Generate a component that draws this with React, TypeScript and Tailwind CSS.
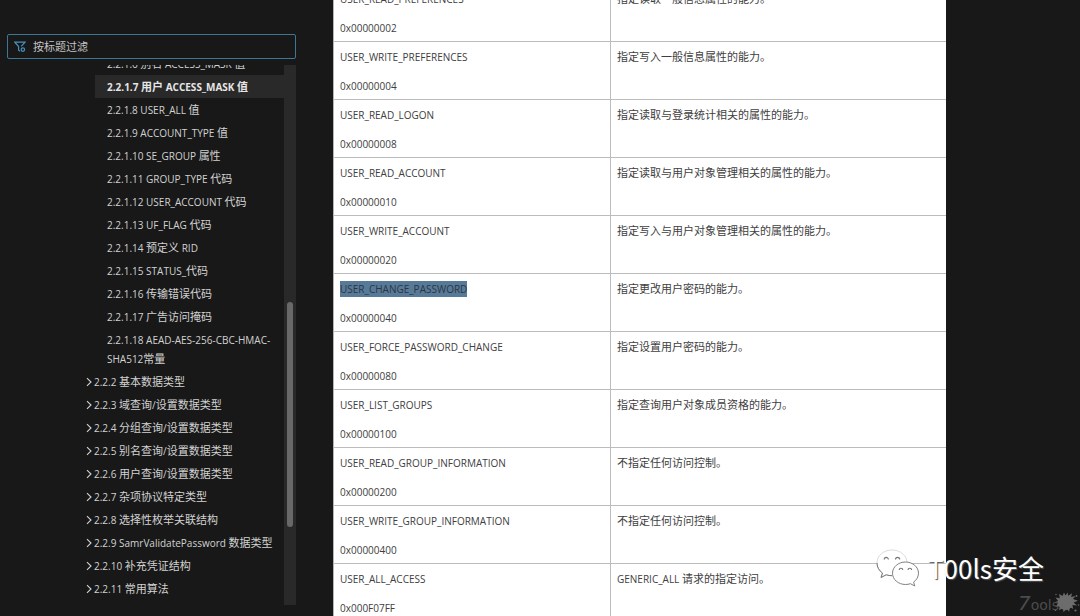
const leafItems = [
  "2.2.1.6 别名 ACCESS_MASK 值",
  "2.2.1.7 用户 ACCESS_MASK 值",
  "2.2.1.8 USER_ALL 值",
  "2.2.1.9 ACCOUNT_TYPE 值",
  "2.2.1.10 SE_GROUP 属性",
  "2.2.1.11 GROUP_TYPE 代码",
  "2.2.1.12 USER_ACCOUNT 代码",
  "2.2.1.13 UF_FLAG 代码",
  "2.2.1.14 预定义 RID",
  "2.2.1.15 STATUS_代码",
  "2.2.1.16 传输错误代码",
  "2.2.1.17 广告访问掩码",
  "2.2.1.18 AEAD-AES-256-CBC-HMAC-SHA512常量",
];

const groupItems = [
  "2.2.2 基本数据类型",
  "2.2.3 域查询/设置数据类型",
  "2.2.4 分组查询/设置数据类型",
  "2.2.5 别名查询/设置数据类型",
  "2.2.6 用户查询/设置数据类型",
  "2.2.7 杂项协议特定类型",
  "2.2.8 选择性枚举关联结构",
  "2.2.9 SamrValidatePassword 数据类型",
  "2.2.10 补充凭证结构",
  "2.2.11 常用算法",
];

const rows = [
  { name: "USER_READ_PREFERENCES", value: "0x00000002", text: "指定读取一般信息属性的能力。" },
  { name: "USER_WRITE_PREFERENCES", value: "0x00000004", text: "指定写入一般信息属性的能力。" },
  { name: "USER_READ_LOGON", value: "0x00000008", text: "指定读取与登录统计相关的属性的能力。" },
  { name: "USER_READ_ACCOUNT", value: "0x00000010", text: "指定读取与用户对象管理相关的属性的能力。" },
  { name: "USER_WRITE_ACCOUNT", value: "0x00000020", text: "指定写入与用户对象管理相关的属性的能力。" },
  { name: "USER_CHANGE_PASSWORD", value: "0x00000040", text: "指定更改用户密码的能力。", marked: true },
  { name: "USER_FORCE_PASSWORD_CHANGE", value: "0x00000080", text: "指定设置用户密码的能力。" },
  { name: "USER_LIST_GROUPS", value: "0x00000100", text: "指定查询用户对象成员资格的能力。" },
  { name: "USER_READ_GROUP_INFORMATION", value: "0x00000200", text: "不指定任何访问控制。" },
  { name: "USER_WRITE_GROUP_INFORMATION", value: "0x00000400", text: "不指定任何访问控制。" },
  { name: "USER_ALL_ACCESS", value: "0x000F07FF", text: "GENERIC_ALL 请求的指定访问。" },
];

// Latin runs are set one size below the Chinese text so both look equally tall.
function Mixed({ text }: { text: string }) {
  const parts = text.split(/([\x20-\x7e]+)/).filter(Boolean);
  return (
    <span>
      {parts.map((part, i) =>
        /^[\x20-\x7e]/.test(part) ? (
          <span key={i} className="text-[10px] leading-none">
            {part}
          </span>
        ) : (
          part
        )
      )}
    </span>
  );
}

function FilterIcon() {
  return (
    <svg viewBox="0 0 12 12" className="h-3 w-3 shrink-0" fill="none" stroke="#4590bd" strokeWidth="1.2" aria-hidden="true">
      <path d="M7.200 5.400 11 1.200H.8l3.800 4.300v3.700l1.600 1" />
      <circle cx="8.900" cy="8.600" r="1.700" />
    </svg>
  );
}

function ChatIcon() {
  return (
    <svg viewBox="0 0 44 38" className="h-[38px] w-11 shrink-0" aria-hidden="true">
      <g fill="#fff">
        <path d="M16 1C7.500 1 1 6.700 1 14c0 4.200 2.100 7.700 5.500 10L5 28.500l5.200-2.700c1.900.6 3.800.9 5.800.9 8.300 0 15-5.700 15-12.900S24.300 1 16 1z" stroke="#ccc" strokeWidth=".7" />
        <path d="M1 14c0 4.200 2.100 7.700 5.500 10L5 28.500l5.200-2.700c1.900.6 3.800.9 5.800.9" fill="none" stroke="#777" strokeWidth="1" />
        <path d="M29.500 13C22.300 13 16.500 18 16.500 24.200s5.800 11.300 13 11.300c1.700 0 3.400-.3 4.900-.8l4.400 2.300-1.200-3.900c3-2.100 4.900-5.300 4.900-8.900C42.500 18 36.700 13 29.500 13z" stroke="#808080" strokeWidth="1" />
      </g>
      <path
        d="M8.200 10.500a2.100 2.100 0 0 1 4.200 0M19.500 10.500a2.100 2.100 0 0 1 4.200 0M23.200 21a1.800 1.800 0 0 1 3.600 0M32 21a1.800 1.800 0 0 1 3.600 0"
        fill="none"
        stroke="#777"
        strokeWidth="1.1"
      />
    </svg>
  );
}

function Splatter() {
  return (
    <svg viewBox="0 0 28 22" className="h-[22px] w-7" fill="#6c6c6c" aria-hidden="true">
      <circle cx="13.500" cy="11" r="7.200" />
      <path d="M12 .5l1.500 3 2.300-3 .3 3.300 4-2.600-1 3.700 4.500-.9-2.600 3 5 1.700-4.400 1.700 3.400 3.200-4.700-.7 1 4.200-3.500-2-.6 4.700-2.700-3.400-3 3.900-.5-4.300-4.200 2.300 1.200-4-4.700.6 2.800-3.400L2 10.500l4.100-1.600L3.500 5.500l4.300.8L7.100 2l3.500 2.100z" />
      <circle cx="24.500" cy="4" r=".9" />
      <circle cx="26.500" cy="13" r=".8" />
      <circle cx="23.500" cy="18.500" r="1.100" />
      <circle cx="3.500" cy="18" r=".9" />
      <circle cx="4" cy="2.500" r=".7" />
    </svg>
  );
}

export default function App() {
  return (
    <div className="relative flex h-screen overflow-hidden bg-[#181818] font-['Open_Sans','Noto_Sans_CJK_SC',sans-serif] text-[11px]">
      <nav className="flex w-[333px] shrink-0 flex-col pt-[34px] pr-[37px] pb-[11px] pl-[7px] text-[#d2d2d2]">
        <label className="flex h-[25px] shrink-0 items-center gap-[7px] rounded-[2px] border border-[#3d7796] px-1.5">
          <FilterIcon />
          <input
            type="text"
            aria-label="按标题过滤"
            placeholder="按标题过滤"
            className="min-w-0 flex-1 bg-transparent pt-0.5 outline-none placeholder:text-[#c4c4c4]"
          />
        </label>
        <div className="mt-1.5 flex min-h-0 flex-1">
          <div className="min-w-0 flex-1 overflow-hidden">
            <ul className="-mt-[13px] ml-[88px] leading-[19px]">
              {leafItems.map((item, i) => (
                <li key={item}>
                  <a
                    href="#"
                    className={i === 1 ? "block bg-[#292929] py-0.5 pl-3 font-bold text-[#e6e6e6]" : "block py-0.5 pl-3"}
                  >
                    <Mixed text={item} />
                  </a>
                </li>
              ))}
            </ul>
            <ul className="ml-[79px] leading-[19px]">
              {groupItems.map((item) => (
                <li key={item}>
                  <a href="#" className="flex items-center gap-0.5 py-0.5 whitespace-nowrap">
                    <svg viewBox="0 0 6 10" className="h-2.5 w-1.5 shrink-0" fill="none" stroke="#d2d2d2" strokeWidth="1.1" aria-hidden="true">
                      <path d="M1 1.200 5 5 1 8.800" />
                    </svg>
                    <Mixed text={item} />
                  </a>
                </li>
              ))}
            </ul>
          </div>
          <div className="flex w-3 shrink-0 flex-col items-center bg-[#292929]">
            <div className="mt-[237px] h-[225px] w-1.5 rounded-full bg-[#686868]" />
          </div>
        </div>
      </nav>
      <main className="min-w-0 flex-1">
        <table className="-mt-[17px] w-full table-fixed border-separate border-spacing-0 border-l border-[#b5b5b5] bg-white text-[#404040]">
          <colgroup>
            <col className="w-[277px]" />
            <col />
          </colgroup>
          <tbody>
            {rows.map((row) => (
              <tr key={row.name} className="align-top leading-4">
                <td className="border-t border-r border-[#bcbcbc] px-1.5 pt-[7px] pb-[5px] text-[10px]">
                  <p className="mb-[13px]">
                    {row.marked ? <mark className="bg-[#587a99] py-px text-[#2c3640]">{row.name}</mark> : row.name}
                  </p>
                  <p>{row.value}</p>
                </td>
                <td className="border-t border-[#bcbcbc] px-1.5 pt-[7px] pb-[5px]">
                  <Mixed text={row.text} />
                </td>
              </tr>
            ))}
          </tbody>
        </table>
      </main>
      <div className="w-[134px] shrink-0" />
      <div className="absolute right-9 bottom-[29px] flex items-center gap-2">
        <ChatIcon />
        <span className="font-['Noto_Sans_CJK_SC',sans-serif] text-[26px] leading-[38px] text-white [text-shadow:1px_1px_1px_#555]">
          T00ls安全
        </span>
      </div>
      <div className="absolute right-0 bottom-0 flex h-6 w-[62px] items-center">
        <div className="absolute right-0 bottom-0.5">
          <Splatter />
        </div>
        <span className="relative flex items-baseline font-['DejaVu_Sans',sans-serif] leading-6 text-[#4c4c4c]">
          <span className="text-[20px] italic">7</span>
          <span className="text-[14px]">ools</span>
        </span>
      </div>
    </div>
  );
}
